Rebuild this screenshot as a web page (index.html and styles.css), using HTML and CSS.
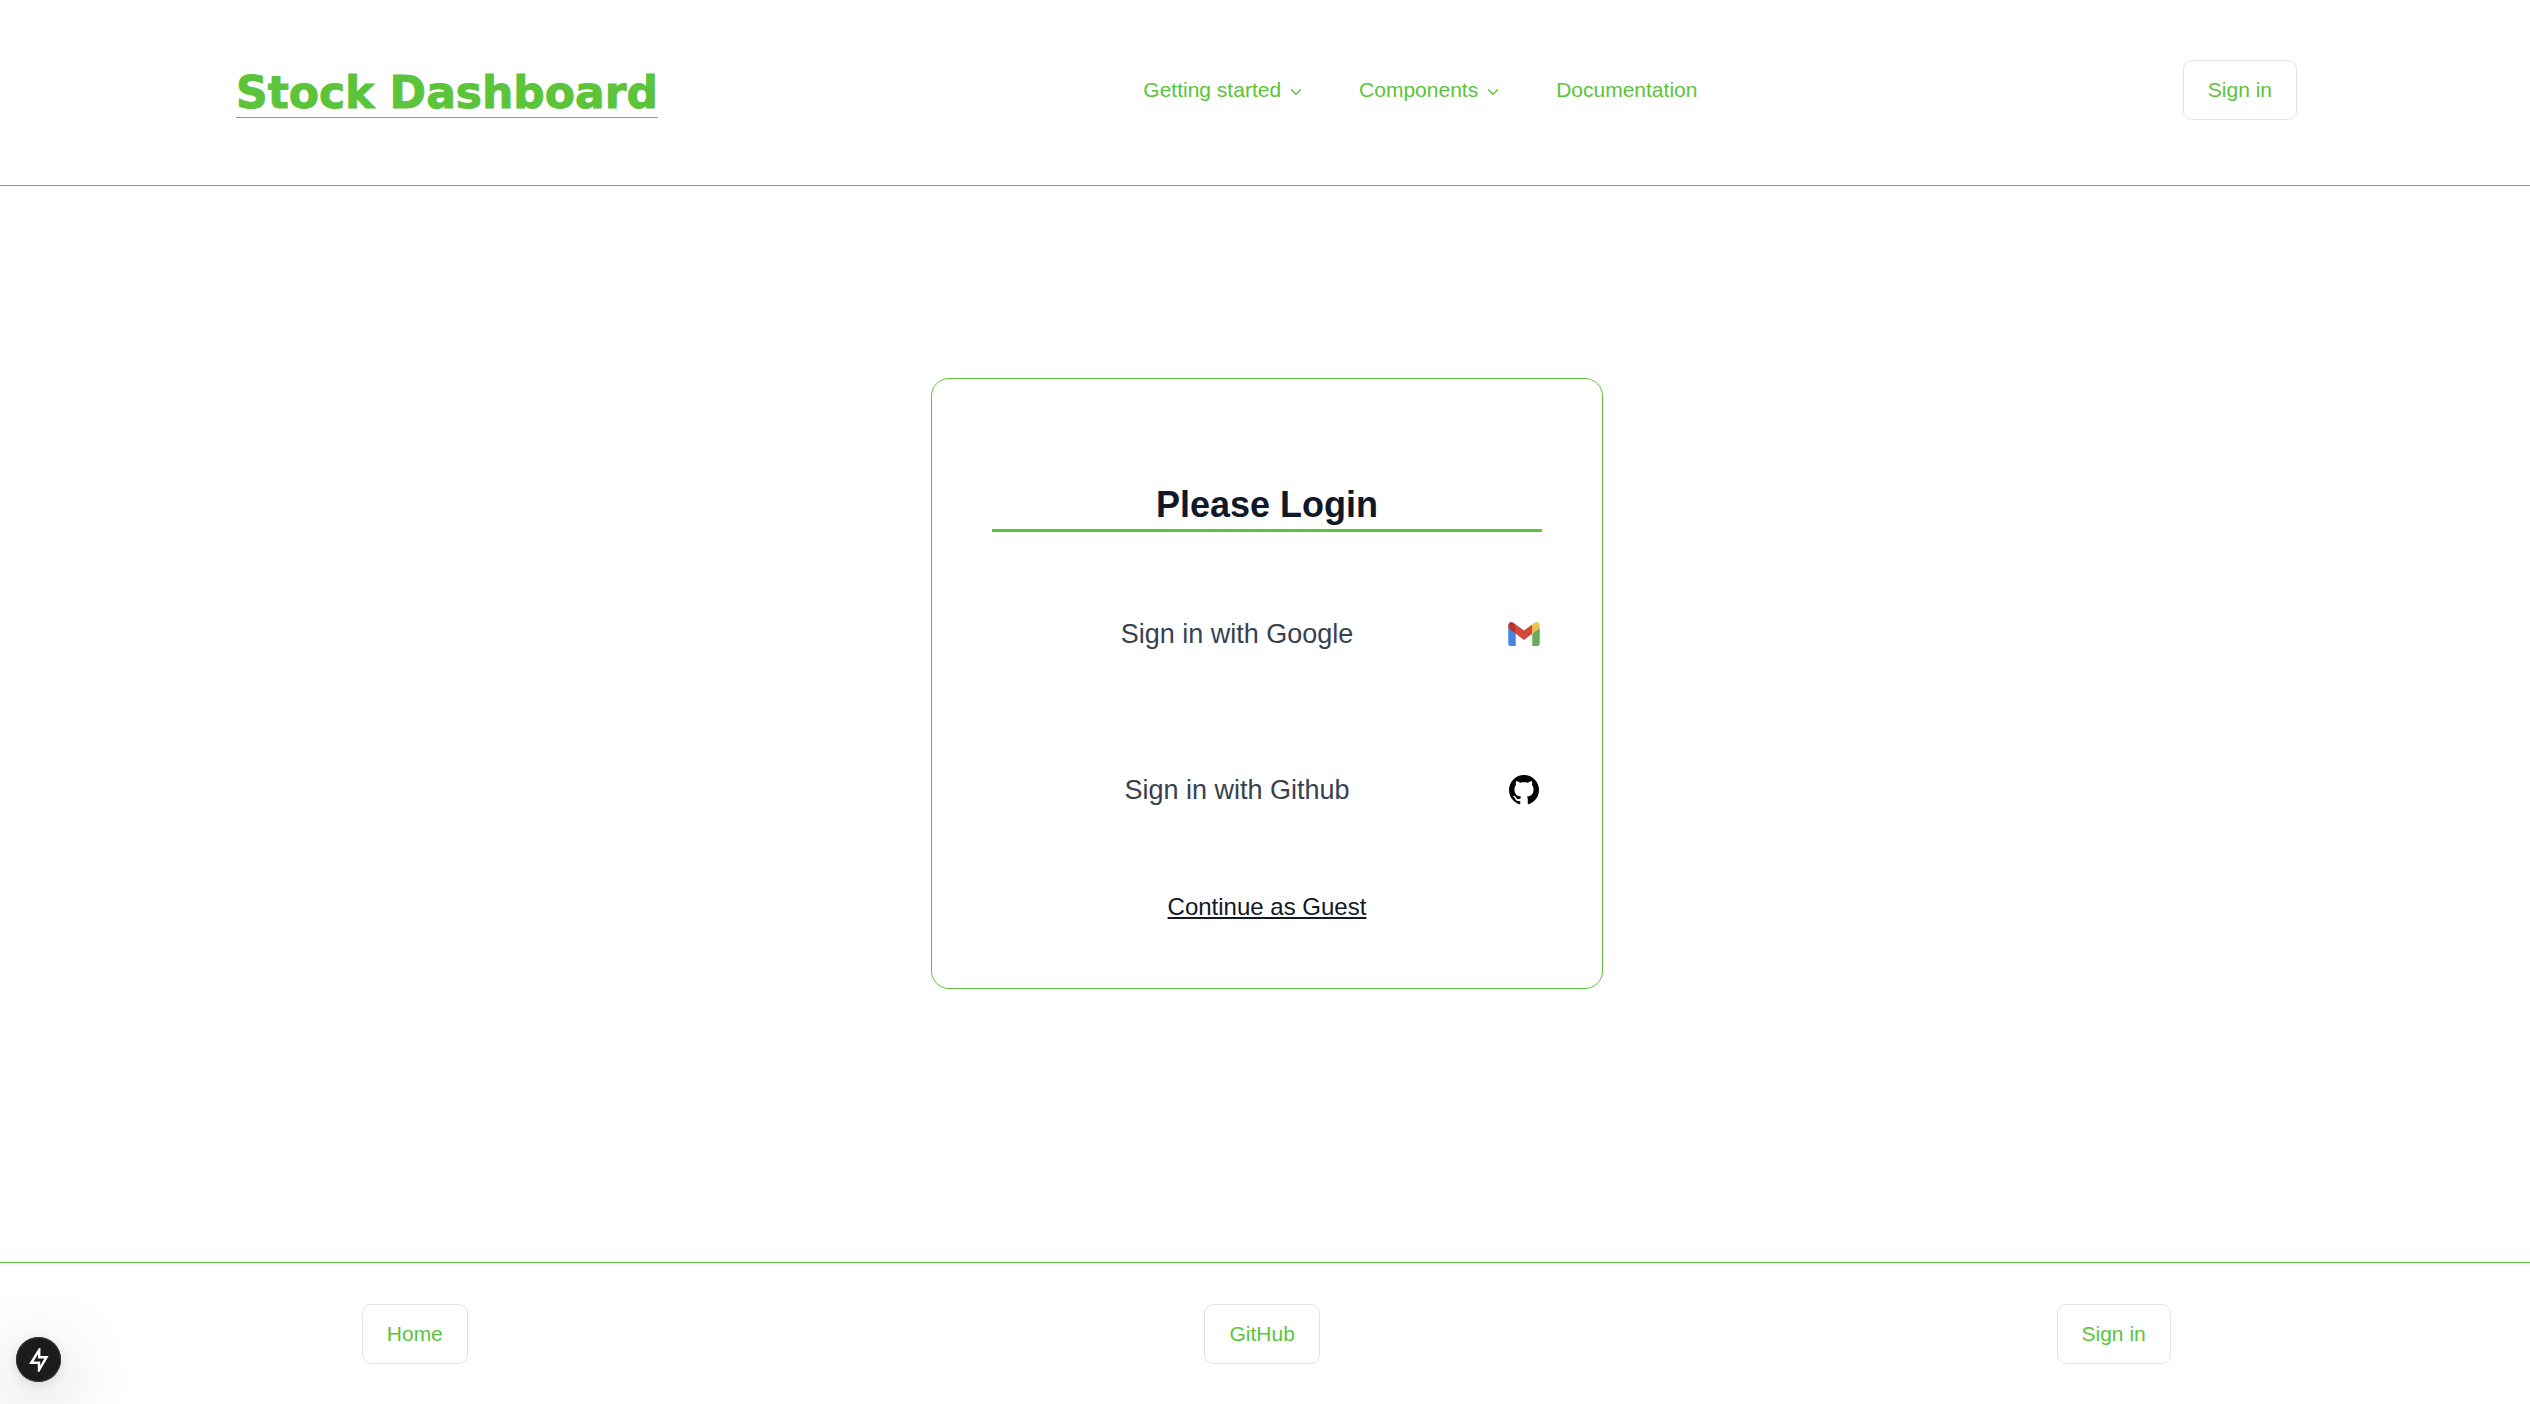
FILE: index.html
```html
<!DOCTYPE html>
<html lang="en">
<head>
<meta charset="utf-8">
<meta name="viewport" content="width=device-width, initial-scale=1">
<title>Stock Dashboard</title>
<link rel="stylesheet" href="styles.css">
</head>
<body>
<header class="header">
  <a class="logo" href="#">Stock Dashboard</a>
  <nav class="nav" aria-label="Main">
    <button class="nav-item" type="button">Getting started
      <svg class="chevron" viewBox="0 0 24 24" aria-hidden="true"><path d="m6 9 6 6 6-6"/></svg>
    </button>
    <button class="nav-item" type="button">Components
      <svg class="chevron" viewBox="0 0 24 24" aria-hidden="true"><path d="m6 9 6 6 6-6"/></svg>
    </button>
    <a class="nav-item" href="#">Documentation</a>
  </nav>
  <button class="button" type="button">Sign in</button>
</header>
<main class="main">
  <section class="card">
    <h1 class="card-title">Please Login</h1>
    <button class="provider" type="button">
      <span class="provider-name">Sign in with Google</span>
      <svg class="provider-icon" viewBox="0 0 48 48" aria-hidden="true">
        <path fill="#67ab5b" d="M45,16.2l-5,2.75l-5,4.75L35,40h7c1.657,0,3-1.343,3-3V16.2z"/>
        <path fill="#4386e0" d="M3,16.2l3.614,1.71L13,23.7V40H6c-1.657,0-3-1.343-3-3V16.2z"/>
        <path fill="#d2483d" d="M35,11.2 24,19.45 13,11.2 12,17 13,23.7 24,31.95 35,23.7 36,17z"/>
        <path fill="#b5382f" d="M3,12.298V16.2l10,7.5V11.2L9.876,8.859C9.132,8.301,8.228,8,7.298,8h0C4.924,8,3,9.924,3,12.298z"/>
        <path fill="#f1c14f" d="M45,12.298V16.2l-10,7.5V11.2l3.124-2.341C38.868,8.301,39.772,8,40.702,8h0C43.076,8,45,9.924,45,12.298z"/>
      </svg>
    </button>
    <button class="provider" type="button">
      <span class="provider-name">Sign in with Github</span>
      <svg class="provider-icon" viewBox="0 0 24 24" aria-hidden="true"><path d="M12 2A10 10 0 0 0 2 12c0 4.42 2.87 8.17 6.84 9.5.5.08.66-.23.66-.5v-1.69c-2.77.6-3.36-1.34-3.36-1.34-.46-1.16-1.11-1.47-1.11-1.47-.91-.62.07-.6.07-.6 1 .07 1.53 1.03 1.53 1.03.87 1.52 2.34 1.07 2.91.83.09-.65.35-1.09.63-1.34-2.22-.25-4.55-1.11-4.55-4.92 0-1.11.38-2 1.03-2.71-.1-.25-.45-1.29.1-2.64 0 0 .84-.27 2.75 1.02.79-.22 1.65-.33 2.5-.33.85 0 1.71.11 2.5.33 1.91-1.29 2.75-1.02 2.75-1.02.55 1.35.2 2.39.1 2.64.65.71 1.03 1.6 1.03 2.71 0 3.82-2.34 4.66-4.57 4.91.36.31.69.92.69 1.85V21c0 .27.16.59.67.5C19.14 20.16 22 16.42 22 12A10 10 0 0 0 12 2z"/></svg>
    </button>
    <a class="guest" href="#">Continue as Guest</a>
  </section>
</main>
<footer class="footer">
  <a class="button" href="#">Home</a>
  <a class="button" href="#">GitHub</a>
  <button class="button" type="button">Sign in</button>
</footer>
<button class="devtools" type="button" aria-label="Developer tools">
  <svg class="bolt" viewBox="0 0 24 24" aria-hidden="true"><path d="M12.200 2 4.200 14.800H12V22L19.500 9.200H12.200z"/></svg>
</button>
</body>
</html>
```
FILE: styles.css
```css
*, *::before, *::after { box-sizing: border-box; }

:root {
  --green: #5bc43a;
  --ink: #111827;
}

body {
  margin: 0;
  min-height: 100vh;
  display: flex;
  flex-direction: column;
  background: #fff;
  color: var(--ink);
  font: 21px/30px "Liberation Sans", Arial, sans-serif;
}

button {
  margin: 0;
  padding: 0;
  border: 0;
  background: none;
  color: inherit;
  font: inherit;
  cursor: pointer;
}

a { color: inherit; text-decoration: none; }
svg { display: block; flex: none; }

.header {
  display: flex;
  align-items: center;
  justify-content: space-between;
  padding: 60px 233px 65px 236px;
  border-bottom: 1px solid var(--green);
  color: var(--green);
}

.logo {
  padding-top: 6px;
  border-bottom: 1px solid var(--green);
  font: 900 44px/48px "Arial Black", "DejaVu Sans", sans-serif;
  -webkit-text-stroke: 1px currentColor;
}

.nav { display: flex; gap: 54px; }
.nav-item { display: flex; align-items: center; gap: 6px; }

.chevron {
  width: 18px;
  height: 18px;
  margin-top: 3px;
  fill: none;
  stroke: currentColor;
  stroke-width: 2;
  stroke-linecap: round;
  stroke-linejoin: round;
}

.button {
  padding: 14px 24px;
  border: 1px solid #e4e4e7;
  border-radius: 9px;
  color: var(--green);
}

.main {
  flex: 1;
  display: flex;
  justify-content: center;
  align-items: flex-start;
  padding: 192px 24px 96px 28px;
}

.card {
  display: flex;
  flex-direction: column;
  width: 100%;
  max-width: 672px;
  padding: 102px 60px 63px;
  border: 1px solid var(--green);
  border-radius: 18px;
}

.card-title {
  margin: 0 0 72px;
  border-bottom: 3px solid var(--green);
  font-size: 36px;
  line-height: 48px;
  text-align: center;
}

.provider {
  display: flex;
  align-items: center;
  gap: 24px;
  height: 60px;
  color: #374151;
  font-size: 27px;
}

.provider + .provider { margin-top: 96px; }
.provider-name { flex: 1; }
.provider-icon { width: 36px; height: 36px; fill: #000; }

.guest {
  align-self: center;
  margin-top: 69px;
  font-size: 24px;
  line-height: 36px;
  text-decoration: underline;
}

.footer {
  display: flex;
  justify-content: space-between;
  padding: 41px 14.2% 40px 14.3%;
  border-top: 1px solid var(--green);
}

.devtools {
  position: fixed;
  left: 16px;
  bottom: 22px;
  display: grid;
  place-items: center;
  width: 45px;
  height: 45px;
  border-radius: 50%;
  background: #1c1c1e;
  color: #fff;
  box-shadow: inset 0 0 0 1px #3a3a3c, 0 3px 12px rgba(0, 0, 0, .12), 0 20px 76px rgba(0, 0, 0, .3);
}

.bolt {
  width: 24px;
  height: 24px;
  fill: none;
  stroke: currentColor;
  stroke-width: 2.4;
}
```
